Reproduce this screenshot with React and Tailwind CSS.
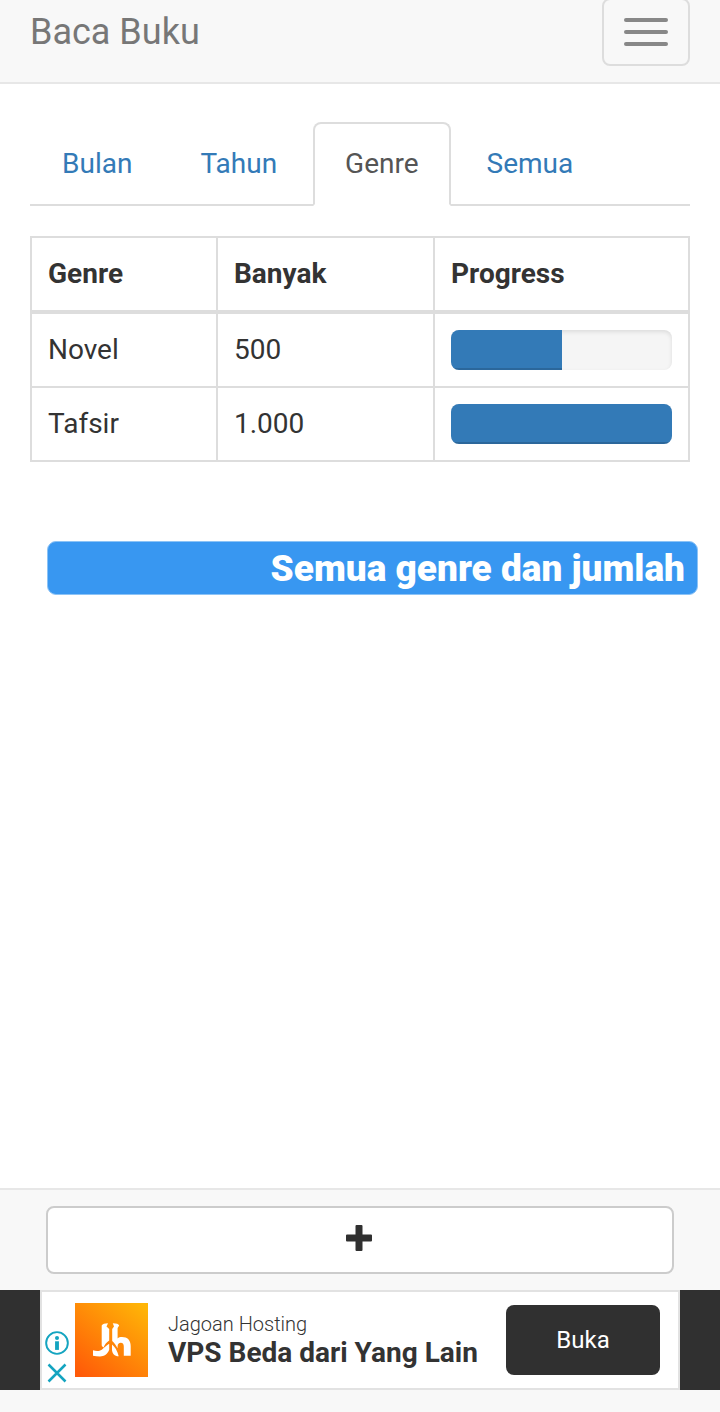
const tabs = ["Bulan", "Tahun", "Genre", "Semua"];

const rows = [
  { genre: "Novel", total: "500", percent: 50 },
  { genre: "Tafsir", total: "1.000", percent: 100 },
];

function Header() {
  return (
    <header className="flex h-[84px] shrink-0 items-start justify-between border-b-2 border-[#e7e7e7] bg-[#f8f8f8] px-[30px]">
      <a className="pt-3 text-[36px] leading-[40px] text-[#777]">Baca Buku</a>
      <button
        aria-label="Menu"
        className="-mt-[2px] flex h-[68px] w-[88px] flex-col items-center justify-center gap-2 rounded-lg border-2 border-[#ddd]"
      >
        <span className="h-1 w-11 rounded-[2px] bg-[#888]" />
        <span className="h-1 w-11 rounded-[2px] bg-[#888]" />
        <span className="h-1 w-11 rounded-[2px] bg-[#888]" />
      </button>
    </header>
  );
}

function Tabs({ active }) {
  return (
    <nav className="flex h-[84px] gap-1 border-b-2 border-[#ddd]">
      {tabs.map((tab) => (
        <a
          key={tab}
          className={
            tab === active
              ? "h-[84px] rounded-t-lg border-2 border-[#ddd] border-b-white bg-white px-[30px] pt-5 leading-[40px] text-[#555]"
              : "h-[84px] border-2 border-transparent px-[30px] pt-5 leading-[40px] text-[#337ab7]"
          }
        >
          {tab}
        </a>
      ))}
    </nav>
  );
}

function Progress({ percent }) {
  return (
    <div className="h-10 overflow-hidden rounded-lg bg-[#f5f5f5] shadow-[inset_0_2px_4px_rgba(0,0,0,0.1)]">
      <div
        className="h-full bg-[#337ab7] shadow-[inset_0_-2px_0_rgba(0,0,0,0.15)]"
        style={{ width: `${percent}%` }}
      />
    </div>
  );
}

function GenreTable() {
  return (
    <table className="mt-[30px] w-[660px] table-fixed border-separate border-spacing-0 border-t-2 border-l-2 border-[#ddd] text-left leading-[40px]">
      <colgroup>
        <col className="w-[186px]" />
        <col className="w-[217px]" />
        <col className="w-[255px]" />
      </colgroup>
      <thead>
        <tr className="h-[76px]">
          {["Genre", "Banyak", "Progress"].map((title) => (
            <th key={title} className="border-r-2 border-b-4 border-[#ddd] px-4 py-0 font-bold">
              {title}
            </th>
          ))}
        </tr>
      </thead>
      <tbody>
        {rows.map((row) => (
          <tr key={row.genre} className="h-[74px]">
            <td className="border-r-2 border-b-2 border-[#ddd] px-4 py-0">{row.genre}</td>
            <td className="border-r-2 border-b-2 border-[#ddd] px-4 py-0">{row.total}</td>
            <td className="border-r-2 border-b-2 border-[#ddd] px-4 py-0">
              <Progress percent={row.percent} />
            </td>
          </tr>
        ))}
      </tbody>
    </table>
  );
}

function AdLogo() {
  return (
    <svg className="h-[74px] w-[73px]" viewBox="0 0 73 74">
      <defs>
        <linearGradient id="ad" x1="0.1" y1="1" x2="0.9" y2="0">
          <stop offset="0" stopColor="#ff5a08" />
          <stop offset="1" stopColor="#ffb507" />
        </linearGradient>
      </defs>
      <rect width="73" height="74" fill="url(#ad)" />
      <g fill="#fff">
        <path d="M26.700 22.500c1-1.500 3-2.200 6.300-2.200l-1.500 3.200 2.700 2.500v11.500c-2.600 1.700-4.600 4-5.600 7-1-.5-1.700-1.300-1.900-2.200z" />
        <path d="M18 47.300c3.500 1.200 6.400 1 8.800-.6 2.700-1.900 4.700-4.500 7.400-5.900v6c-1.500 4.300-5 6.700-9.200 6.700-2.500 0-4.900-.2-7-.8z" />
        <path d="M37.800 20.300c4 0 5.600.8 6.400 2.300l-1.600 2.400v10.500c1-.9 2.400-1.400 4.400-1.400 5.500 0 8.700 3.300 8.700 9v9.700h-6.900v-9c0-2.700-1-4-3-4-2 0-3.200 1.300-3.200 3.500v2c-1.500-3-3.300-5.500-5.400-7.300V26l1.800-2.600z" />
        <path d="M37 41.500c2.600 2.200 5.500 6.200 6.700 11.800-4.400-.1-6.400-2.800-6.700-6.300z" />
      </g>
    </svg>
  );
}

function AdBanner() {
  return (
    <div className="flex h-[100px] bg-[#303030] px-10">
      <div className="flex w-[640px] border-2 border-[#e2e2e2] bg-white">
        <div className="flex w-[33px] flex-col items-center gap-2 pt-[39px] pr-1">
          <svg className="h-6 w-6 shrink-0" viewBox="0 0 25 25" fill="none">
            <circle cx="12.500" cy="12.500" r="11.300" stroke="#14a4c0" strokeWidth="2" />
            <circle cx="12.500" cy="7.300" r="2.100" fill="#14a4c0" />
            <rect x="10.500" y="10.700" width="4" height="9" fill="#14a4c0" />
          </svg>
          <svg className="h-5 w-5 shrink-0" viewBox="0 0 20 20" stroke="#14a4c0" strokeWidth="2.500">
            <path d="M1.500 1.500l17 17M18.500 1.500l-17 17" />
          </svg>
        </div>
        <div className="pt-[11px]">
          <AdLogo />
        </div>
        <div className="w-[338px] pt-[20px] pl-5 whitespace-nowrap">
          <div className="text-[20px] leading-[24px] font-light">Jagoan Hosting</div>
          <div className="mt-[1px] text-[28px] leading-[32px] font-bold">VPS Beda dari Yang Lain</div>
        </div>
        <div className="pt-[13px] pl-5">
          <button className="h-[70px] w-[154px] rounded-lg bg-[#303030] text-[24px] text-white">
            Buka
          </button>
        </div>
      </div>
    </div>
  );
}

export default function App() {
  return (
    <div className="flex h-[1412px] w-[720px] flex-col overflow-hidden bg-white font-[Roboto,sans-serif] text-[28px] text-[#333]">
      <Header />
      <main className="flex-1 px-[30px] pt-[38px]">
        <Tabs active="Genre" />
        <GenreTable />
        <div className="mt-[79px] ml-[17px] h-[54px] w-[651px] rounded-[9px] border border-[#8cc3f6] bg-[#3897f1] pr-3 text-right text-[37px] leading-[53px] font-black text-white">
          Semua genre dan jumlah
        </div>
      </main>
      <footer className="h-[224px] shrink-0 border-t-2 border-[#e7e7e7] bg-[#f8f8f8]">
        <div className="px-[46px] py-4">
          <button
            aria-label="Tambah"
            className="flex h-[68px] w-full items-center justify-center rounded-lg border-2 border-[#ccc] bg-white"
          >
            <svg className="mr-[3px] mb-1 h-[26px] w-[26px]" viewBox="0 0 26 26" fill="#303030">
              <path d="M10.500 0h5a1 1 0 0 1 1 1v8.500H25a1 1 0 0 1 1 1v5a1 1 0 0 1-1 1h-8.500V25a1 1 0 0 1-1 1h-5a1 1 0 0 1-1-1v-8.500H1a1 1 0 0 1-1-1v-5a1 1 0 0 1 1-1h8.500V1a1 1 0 0 1 1-1z" />
            </svg>
          </button>
        </div>
        <AdBanner />
      </footer>
    </div>
  );
}
